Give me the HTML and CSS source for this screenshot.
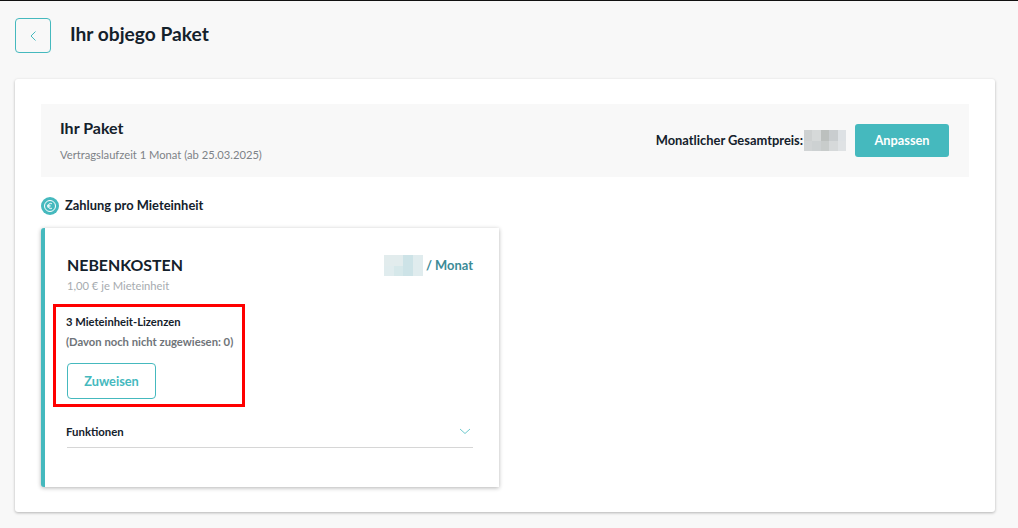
FILE: index.html
```html
<!DOCTYPE html>
<html lang="de">
<head>
<meta charset="utf-8">
<title>Ihr objego Paket</title>
<link rel="stylesheet" href="styles.css">
</head>
<body>
<header class="page-head">
  <button class="back" type="button" aria-label="Zurück">
    <svg width="8" height="12" viewBox="0 0 8 12"><path d="M6.5 1.5 L2 6 L6.5 10.5" fill="none" stroke="#45b9be" stroke-width="1"/></svg>
  </button>
  <h1 class="title">Ihr objego Paket</h1>
</header>
<main class="card">
  <section class="summary">
    <div class="summary-info">
      <h2 class="summary-title">Ihr Paket</h2>
      <p class="summary-term">Vertragslaufzeit 1 Monat (ab 25.03.2025)</p>
    </div>
    <div class="summary-actions">
      <span class="total-label">Monatlicher Gesamtpreis:</span>
      <div class="blur blur-grey">
        <i class="g1"></i><i class="g2"></i><i class="g3"></i><i class="g4"></i><i class="g5"></i>
        <i class="g6"></i><i class="g7"></i><i class="g8"></i><i class="g9"></i><i class="g10"></i>
      </div>
      <button class="primary" type="button">Anpassen</button>
    </div>
  </section>
  <h3 class="section-head">
    <svg class="euro" width="18" height="18" viewBox="0 0 18 18">
      <circle cx="9" cy="9" r="9" fill="#45b9be"/>
      <circle cx="9" cy="9" r="5.5" fill="none" stroke="#fff" stroke-width="1"/>
      <path d="M11 6.8 A2.6 2.6 0 1 0 11 11.2 M6 8.3 H9.5 M6 9.8 H9.5" fill="none" stroke="#fff" stroke-width="0.9"/>
    </svg>
    Zahlung pro Mieteinheit
  </h3>
  <article class="plan">
    <div class="plan-head">
      <div>
        <h4 class="plan-name">NEBENKOSTEN</h4>
        <p class="plan-rate">1,00 € je Mieteinheit</p>
      </div>
      <div class="plan-price">
        <div class="blur blur-teal">
          <i class="t1"></i><i class="t1"></i><i class="t3"></i><i class="t4"></i>
          <i class="t4"></i><i class="t5"></i><i class="t3"></i><i class="t4"></i>
        </div>
        <span class="per">/ Monat</span>
      </div>
    </div>
    <div class="licenses">
      <p class="lic-count">3 Mieteinheit-Lizenzen</p>
      <p class="lic-note">(Davon noch nicht zugewiesen: 0)</p>
      <button class="outline" type="button">Zuweisen</button>
    </div>
    <div class="features">
      <span class="features-label">Funktionen</span>
      <svg width="12" height="7" viewBox="0 0 12 7"><path d="M1 1 L6 5.5 L11 1" fill="none" stroke="#6fcace" stroke-width="1"/></svg>
    </div>
  </article>
</main>
</body>
</html>
```
FILE: styles.css
```css
* { box-sizing: border-box; }
html, body { height: 100%; }
body {
  margin: 0;
  height: 528px;
  overflow: hidden;
  background: #f8f8f8;
  border-top: 1px solid #111;
  font-family: Lato, "Open Sans", sans-serif;
  color: #14212b;
}
h1, h2, h3, h4, p { margin: 0; }
button { font-family: inherit; cursor: pointer; }

.page-head {
  display: flex;
  align-items: flex-start;
  gap: 19px;
  padding: 17px 15px 0;
}
.back {
  width: 36px;
  height: 35px;
  padding: 0;
  display: flex;
  align-items: center;
  justify-content: center;
  background: transparent;
  border: 1px solid #45b9be;
  border-radius: 4px;
}
.title { font-size: 19.2px; line-height: 32px; font-weight: 700; }

.card {
  margin: 26px 23px 0 15px;
  height: 433px;
  padding: 25px 26px;
  background: #fff;
  border-radius: 3px;
  box-shadow: 0 1px 3px rgba(0, 0, 0, .28);
}
.summary {
  display: flex;
  align-items: center;
  justify-content: space-between;
  height: 73px;
  padding: 0 20px 0 19px;
  background: #f8f8f8;
}
.summary-title { font-size: 16px; line-height: 20px; font-weight: 700; }
.summary-term { margin-top: 9px; font-size: 11.2px; line-height: 16px; color: #7d8287; }
.summary-actions { display: flex; align-items: center; }
.total-label { padding-bottom: 2px; font-size: 12.9px; font-weight: 700; }
.blur { display: grid; }
.blur i { display: block; }
.blur-grey {
  grid-template-columns: repeat(5, 8.4px);
  grid-template-rows: repeat(2, 10.5px);
  margin: 0 9px 0 1px;
}
.g1 { background: #ced1d1; }
.g2 { background: #d6d9d9; }
.g3 { background: #bcc0be; }
.g4 { background: #c9cdcf; }
.g5 { background: #dde1e4; }
.g6 { background: #d1d4d5; }
.g7 { background: #cdd1d2; }
.g8 { background: #c8cccb; }
.g9 { background: #d6d9da; }
.g10 { background: #dfe2e4; }
.primary {
  width: 94px;
  height: 33px;
  padding: 0 0 2px;
  border: 0;
  border-radius: 3px;
  background: #45b9be;
  color: #fff;
  font-size: 12.8px;
  font-weight: 700;
}
.section-head {
  display: flex;
  align-items: center;
  gap: 6px;
  margin-top: 18px;
  height: 20px;
  font-size: 12.9px;
  font-weight: 700;
}
.euro { margin-top: 2px; }
.plan {
  width: 458px;
  height: 259px;
  margin-top: 13px;
  padding: 0 26px 0 22px;
  background: #fff;
  border-left: 4px solid #45b9be;
  border-radius: 3px 0 0 3px;
  box-shadow: 0 1px 4px rgba(0, 0, 0, .3);
}
.plan-head {
  display: flex;
  justify-content: space-between;
  padding-top: 27px;
  height: 76px;
}
.plan-name { font-size: 15.9px; line-height: 20px; font-weight: 700; }
.plan-rate { margin-top: 3px; font-size: 11.2px; line-height: 16px; color: #a6abaf; }
.plan-price { display: flex; align-items: flex-start; }
.blur-teal {
  grid-template-columns: repeat(4, 9.75px);
  grid-template-rows: repeat(2, 10.5px);
  margin-right: 3px;
}
.t1 { background: #e2eced; }
.t3 { background: #cde3e7; }
.t4 { background: #e0ecee; }
.t5 { background: #d6e8ea; }
.per { font-size: 12.9px; line-height: 21px; font-weight: 700; color: #3b8b97; }
.licenses {
  width: 192px;
  height: 103px;
  margin-left: -14px;
  padding: 7px 0 0 10px;
  border: 3px solid #f00;
}
.lic-count { font-size: 11.2px; line-height: 16px; font-weight: 700; }
.lic-note { margin-top: 4px; font-size: 11.25px; line-height: 16px; font-weight: 700; color: #6f7479; white-space: nowrap; }
.outline {
  display: block;
  width: 89px;
  height: 36px;
  margin: 13px 0 0 1px;
  padding: 0;
  background: #fff;
  border: 1px solid #45b9be;
  border-radius: 4px;
  color: #45b9be;
  font-size: 12.8px;
  font-weight: 700;
}
.features {
  display: flex;
  align-items: center;
  justify-content: space-between;
  height: 41px;
  padding: 9px 2px 0 0;
  border-bottom: 1px solid #d6d6d6;
}
.features-label { margin-left: -1px; font-size: 11.4px; font-weight: 700; }
```
